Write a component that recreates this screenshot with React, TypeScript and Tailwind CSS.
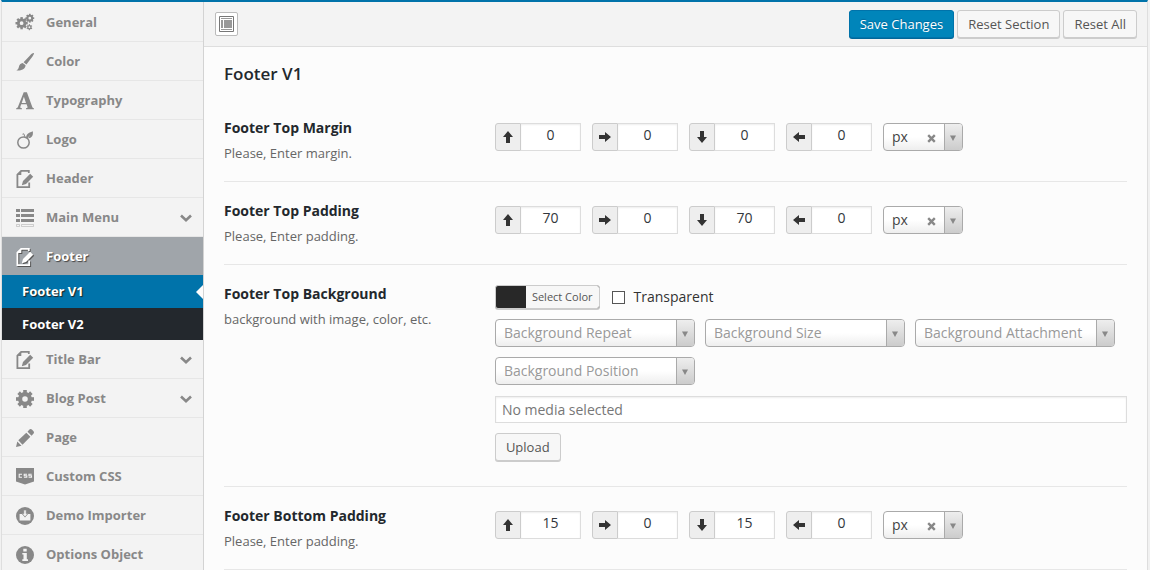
import { useState } from "react";
import type { ReactNode } from "react";

function Gear({ cx, cy, r, teeth = 8 }: { cx: number; cy: number; r: number; teeth?: number }) {
  return (
    <g>
      <circle cx={cx} cy={cy} r={r * 0.54} fill="none" stroke="currentColor" strokeWidth={r * 0.46} />
      {Array.from({ length: teeth }, (_, i) => (
        <rect
          key={i}
          x={cx - r * 0.2}
          y={cy - r}
          width={r * 0.4}
          height={r * 0.36}
          fill="currentColor"
          transform={`rotate(${(i * 360) / teeth} ${cx} ${cy})`}
        />
      ))}
    </g>
  );
}

function EditIcon() {
  return (
    <>
      <path d="M12.800 3V.9H5.200L1.400 4.700v12.400h11.800v-4.600" fill="none" stroke="currentColor" strokeWidth="1.800" />
      <path d="M5.300 1v4H1.300z" fill="currentColor" />
      <path d="M14.200 3.800l3 3-7.200 7.200-4.200 1.200L7 11z" fill="currentColor" />
    </>
  );
}

const icons: Record<string, ReactNode> = {
  cogs: (
    <>
      <Gear cx={5.6} cy={9.2} r={6.1} />
      <Gear cx={13.8} cy={4.2} r={4.4} />
      <Gear cx={13.4} cy={13.2} r={3} teeth={6} />
    </>
  ),
  brush: (
    <path
      d="M17.9.1C18.3.6 17.6 2 16.5 3.600L10.400 11.400 7.600 9.200 14 2.400C15.700.7 17.400-.2 17.900.1zM6.700 10l2.900 2.200C9.500 14.600 7.600 16.600 4.600 17.200c-1.700.4-3.200.4-4.200 0 1.500-.5 2-1.400 2.400-3 .5-2.300 1.800-3.900 3.900-4.200z"
      fill="currentColor"
    />
  ),
  font: (
    <path
      fillRule="evenodd"
      d="M7.700.3h3.200l5.400 14.700c.3.800.8 1.200 1.600 1.300v.9h-7.900v-.9c1.500-.1 1.800-.6 1.400-1.700l-.8-2.400H5.200l-.8 2.300c-.4 1.200.1 1.700 1.600 1.800v.9H.2v-.9c1-.2 1.500-.7 1.900-1.700zM5.700 10.900h4.300L7.900 4.800z"
      fill="currentColor"
    />
  ),
  fruit: (
    <>
      <ellipse cx="7.500" cy="11.500" rx="5.700" ry="5.600" fill="none" stroke="currentColor" strokeWidth="1.500" />
      <path d="M10.200 7C9.800 3.800 12 1.900 16.800.2c.6 4.300-.9 6.900-4.600 7l2-3.500-3.100 4z" fill="currentColor" />
      <path d="M9.400 7.200L7.800 2.800l-1.300.4" fill="none" stroke="currentColor" strokeWidth="1" />
    </>
  ),
  edit: <EditIcon />,
  list: (
    <>
      <path d="M0 0h4v3H0zM5 0h13v3H5zM0 5h4v3H0zM5 5h13v3H5zM0 10h4v3H0zM5 10h13v3H5z" fill="currentColor" />
      <path d="M.5 15.500h3v2h-3zM5.500 15.500h12v2h-12z" fill="none" stroke="currentColor" strokeOpacity=".35" />
    </>
  ),
  cog: <Gear cx={9} cy={9} r={9} />,
  pencil: (
    <path
      d="M0 18l1.300-5.500 4.200 4.200zM2.300 11.300l8-7.600 4.100 4.100-7.900 8zM11.500 2.700l1.700-1.900c1-1.100 2-.9 2.900-.1l1.200 1.200c.9.900 1 2 0 2.900l-1.700 1.900z"
      fill="currentColor"
    />
  ),
  css: (
    <>
      <path d="M0 0h18v13.500L9 16.500 0 13.500z" fill="currentColor" />
      <path
        d="M6 6.200H3.200v3H6M11 6.200H8.200v1.500h2.600v1.500H7.900M15.700 6.200h-2.800v1.500h2.600v1.500h-2.900"
        fill="none"
        stroke="#f3f3f3"
        strokeWidth="1.100"
      />
    </>
  ),
  download: (
    <>
      <circle cx="9" cy="9" r="9" fill="currentColor" />
      <path d="M3.600 7h2.600L9 10.600 11.800 7h2.600v6.400H3.600z" fill="#f3f3f3" />
      <path d="M7.800 3h2.400v3.600h1.700L9 9.900 6.100 6.600h1.700z" fill="#f3f3f3" stroke="currentColor" strokeWidth=".6" />
    </>
  ),
  info: (
    <>
      <circle cx="9" cy="9" r="9" fill="currentColor" />
      <path d="M7.300 2.700h3.400v2.900H7.300zM6.300 7h4.500v6.300H12v1.700H6.300v-1.700h1.200V8.600H6.300z" fill="#f3f3f3" />
    </>
  ),
};

function MenuIcon({ name }: { name: string }) {
  return (
    <svg className="h-[18px] w-[18px] shrink-0 overflow-visible" viewBox="0 0 18 18" aria-hidden="true">
      {icons[name]}
    </svg>
  );
}

function MenuItem({ icon, label, open }: { icon: string; label: string; open?: boolean }) {
  return (
    <li>
      <a
        href="#"
        className="flex h-[39px] items-center gap-3 border-b border-[#e6e6e6] pt-px pr-[11px] pl-[14px] text-[13px] font-bold text-[#888]"
      >
        <MenuIcon name={icon} />
        <span className="grow">{label}</span>
        {open && (
          <svg className="h-3 w-3" viewBox="0 0 12 12" aria-hidden="true">
            <path d="M1 3.500l5 4.700 5-4.700" fill="none" stroke="currentColor" strokeWidth="2.600" />
          </svg>
        )}
      </a>
    </li>
  );
}

const arrowTurns = [
  { side: "top", turn: "" },
  { side: "right", turn: "rotate-90" },
  { side: "bottom", turn: "rotate-180" },
  { side: "left", turn: "-rotate-90" },
];

function SelectArrow() {
  return (
    <span className="pointer-events-none absolute inset-y-px right-px flex w-[18px] items-center justify-center rounded-r-[3px] border-l border-[#aaa] bg-linear-to-b from-[#eee] to-[#ccc]">
      <svg className="mt-[2px] h-[6px] w-[6px]" viewBox="0 0 6 6" aria-hidden="true">
        <path d="M0 .5h6L3 6z" fill="#888" />
      </svg>
    </span>
  );
}

const selectLook =
  "block h-7 w-full appearance-none rounded-[4px] border border-[#aaa] bg-linear-to-t from-[#eee] to-white to-50% pr-5 pl-2 text-sm leading-[26px] outline-none";

function Placeholder({ label }: { label: string }) {
  return (
    <div className="relative h-7 w-[200px]">
      <select aria-label={label} className={`${selectLook} text-[#999]`}>
        <option>{label}</option>
      </select>
      <SelectArrow />
    </div>
  );
}

function Spacing({ name, values }: { name: string; values: string[] }) {
  return (
    <div className="flex flex-wrap items-start gap-[11px] pt-1">
      {arrowTurns.map(({ side, turn }, i) => (
        <label key={side} className="flex h-7 w-[86px]">
          <span className="flex w-[26px] shrink-0 items-center justify-center rounded-l-[3px] border border-[#ccc] bg-[#eee]">
            <svg className={`h-3 w-3 ${turn}`} viewBox="0 0 12 12" aria-hidden="true">
              <path d="M6 0l5 6H8v6H4V6H1z" fill="#333" />
            </svg>
          </span>
          <input
            aria-label={`${name} ${side}`}
            defaultValue={values[i]}
            className="w-full min-w-0 border border-l-0 border-[#ddd] bg-white pb-1 text-center text-sm text-[#32373c] inset-shadow-[0_1px_2px_rgba(0,0,0,0.07)] outline-none"
          />
        </label>
      ))}
      <div className="relative h-7 w-20">
        <select aria-label={`${name} unit`} className={`${selectLook} text-[#444]`}>
          <option>px</option>
        </select>
        <button type="button" aria-label="Clear unit" className="absolute top-[11px] right-[27px] text-[#888]">
          <svg className="block h-[9px] w-[9px]" viewBox="0 0 9 9">
            <path d="M1.200 1.200l6.600 6.600M7.800 1.200L1.200 7.800" stroke="currentColor" strokeWidth="2.400" />
          </svg>
        </button>
        <SelectArrow />
      </div>
    </div>
  );
}

function Row({ title, note, children }: { title: string; note: string; children: ReactNode }) {
  return (
    <section className="grid grid-cols-[30%_minmax(0,1fr)] border-b border-[#e7e7e7] pt-5 pb-[19px]">
      <div className="pr-4">
        <h3 className="text-sm leading-[18px] font-bold text-[#23282d]">{title}</h3>
        <p className="pt-[7px] text-[13px] leading-[18px] text-[#666]">{note}</p>
      </div>
      {children}
    </section>
  );
}

const buttonLook =
  "rounded-[3px] border border-[#ccc] bg-[#f7f7f7] px-[10px] pt-px text-[13px] text-[#555] shadow-[0_1px_0_#ccc]";

export default function App() {
  const [transparent, setTransparent] = useState(false);

  return (
    <div className="h-screen overflow-hidden bg-[#f1f1f1] pr-[2px] pl-px font-['Open_Sans',sans-serif]">
      <div className="flex h-full border-x border-t-2 border-x-[#dedede] border-t-[#0073aa] bg-[#fcfcfc]">
        <nav className="w-[202px] shrink-0 border-r border-[#d3d3d3] bg-[#f3f3f3] pt-px">
          <ul>
            <MenuItem icon="cogs" label="General" />
            <MenuItem icon="brush" label="Color" />
            <MenuItem icon="font" label="Typography" />
            <MenuItem icon="fruit" label="Logo" />
            <MenuItem icon="edit" label="Header" />
            <MenuItem icon="list" label="Main Menu" open />
            <li>
              <a
                href="#"
                className="flex h-[38px] items-center gap-3 bg-[#a0a5aa] pt-px pl-[14px] text-[13px] font-bold text-white text-shadow-[1px_1px_1px_#444]"
              >
                <span className="drop-shadow-[1px_1px_0_#555]">
                  <MenuIcon name="edit" />
                </span>
                Footer
              </a>
              <ul className="bg-[#23282d] text-[13px] font-bold text-white text-shadow-[1px_1px_1px_#222]">
                <li className="border-b border-[#0073aa] bg-[#0073aa]">
                  <a href="#" className="flex h-8 items-center justify-between pt-px pl-5">
                    Footer V1
                    <svg className="h-[14px] w-[7px]" viewBox="0 0 7 14" aria-hidden="true">
                      <path d="M7 0v14L0 7z" fill="#fcfcfc" />
                    </svg>
                  </a>
                </li>
                <li>
                  <a href="#" className="flex h-8 items-center pt-px pl-5">
                    Footer V2
                  </a>
                </li>
              </ul>
            </li>
            <MenuItem icon="edit" label="Title Bar" open />
            <MenuItem icon="cog" label="Blog Post" open />
            <MenuItem icon="pencil" label="Page" />
            <MenuItem icon="css" label="Custom CSS" />
            <MenuItem icon="download" label="Demo Importer" />
            <MenuItem icon="info" label="Options Object" />
          </ul>
        </nav>

        <main className="min-w-0 grow">
          <header className="flex h-[45px] items-center justify-between border-b border-[#dedede] bg-[#f3f3f3] pr-[10px] pl-[11px]">
            <button
              type="button"
              aria-label="Expand options"
              className="flex h-6 w-[23px] items-center justify-center rounded-[2px] border border-[#bbb] bg-white"
            >
              <svg className="h-4 w-[15px]" viewBox="0 0 15 16" aria-hidden="true">
                <path d="M.5.5h14v15H.5z" fill="#fff" stroke="#777" />
                <path d="M2 2h11v1H2zM2 4h2v8H2zM5 4h8v8H5zM2 13h11v1H2z" fill="#999" />
              </svg>
            </button>
            <div className="flex gap-[3px]">
              <button
                type="button"
                className="h-7 rounded-[3px] border border-[#0073aa] bg-[#0085ba] px-[10px] pt-px text-[13px] text-white shadow-[0_1px_0_#006799] text-shadow-[0_-1px_1px_#006799]"
              >
                Save Changes
              </button>
              <button type="button" className={`h-7 ${buttonLook}`}>
                Reset Section
              </button>
              <button type="button" className={`h-7 ${buttonLook}`}>
                Reset All
              </button>
            </div>
          </header>

          <div className="px-5">
            <h2 className="pt-4 pb-[14px] text-[17px] leading-[22px] font-semibold text-[#23282d]">Footer V1</h2>

            <Row title="Footer Top Margin" note="Please, Enter margin.">
              <Spacing name="Margin" values={["0", "0", "0", "0"]} />
            </Row>
            <Row title="Footer Top Padding" note="Please, Enter padding.">
              <Spacing name="Top padding" values={["70", "0", "70", "0"]} />
            </Row>
            <Row title="Footer Top Background" note="background with image, color, etc.">
              <div className="pb-[6px]">
                <div className="flex items-center gap-3">
                  <button
                    type="button"
                    className="flex h-6 rounded-[3px] border border-[#ccc] bg-[#282828] pl-[30px] text-[11px] leading-[22px] text-[#555] shadow-[0_1px_0_#ccc]"
                  >
                    <span className="rounded-r-[2px] bg-[#f7f7f7] px-[6px]">Select Color</span>
                  </button>
                  <label className="flex items-center gap-[9px] text-sm leading-5 text-[#333]">
                    <input
                      type="checkbox"
                      checked={transparent}
                      onChange={(e) => setTransparent(e.target.checked)}
                      className="h-[13px] w-[13px] appearance-none border border-[#555] bg-white checked:bg-[#0073aa]"
                    />
                    Transparent
                  </label>
                </div>
                <div className="flex flex-wrap gap-[10px] pt-[10px]">
                  <Placeholder label="Background Repeat" />
                  <Placeholder label="Background Size" />
                  <Placeholder label="Background Attachment" />
                  <Placeholder label="Background Position" />
                </div>
                <input
                  readOnly
                  aria-label="Background media"
                  placeholder="No media selected"
                  className="mt-[11px] block h-[27px] w-full border border-[#ddd] bg-white px-[6px] text-sm inset-shadow-[0_1px_2px_rgba(0,0,0,0.07)] outline-none placeholder:text-[#777]"
                />
                <button type="button" className={`mt-[10px] block h-7 ${buttonLook}`}>
                  Upload
                </button>
              </div>
            </Row>
            <Row title="Footer Bottom Padding" note="Please, Enter padding.">
              <Spacing name="Bottom padding" values={["15", "0", "15", "0"]} />
            </Row>
          </div>
        </main>
      </div>
    </div>
  );
}
